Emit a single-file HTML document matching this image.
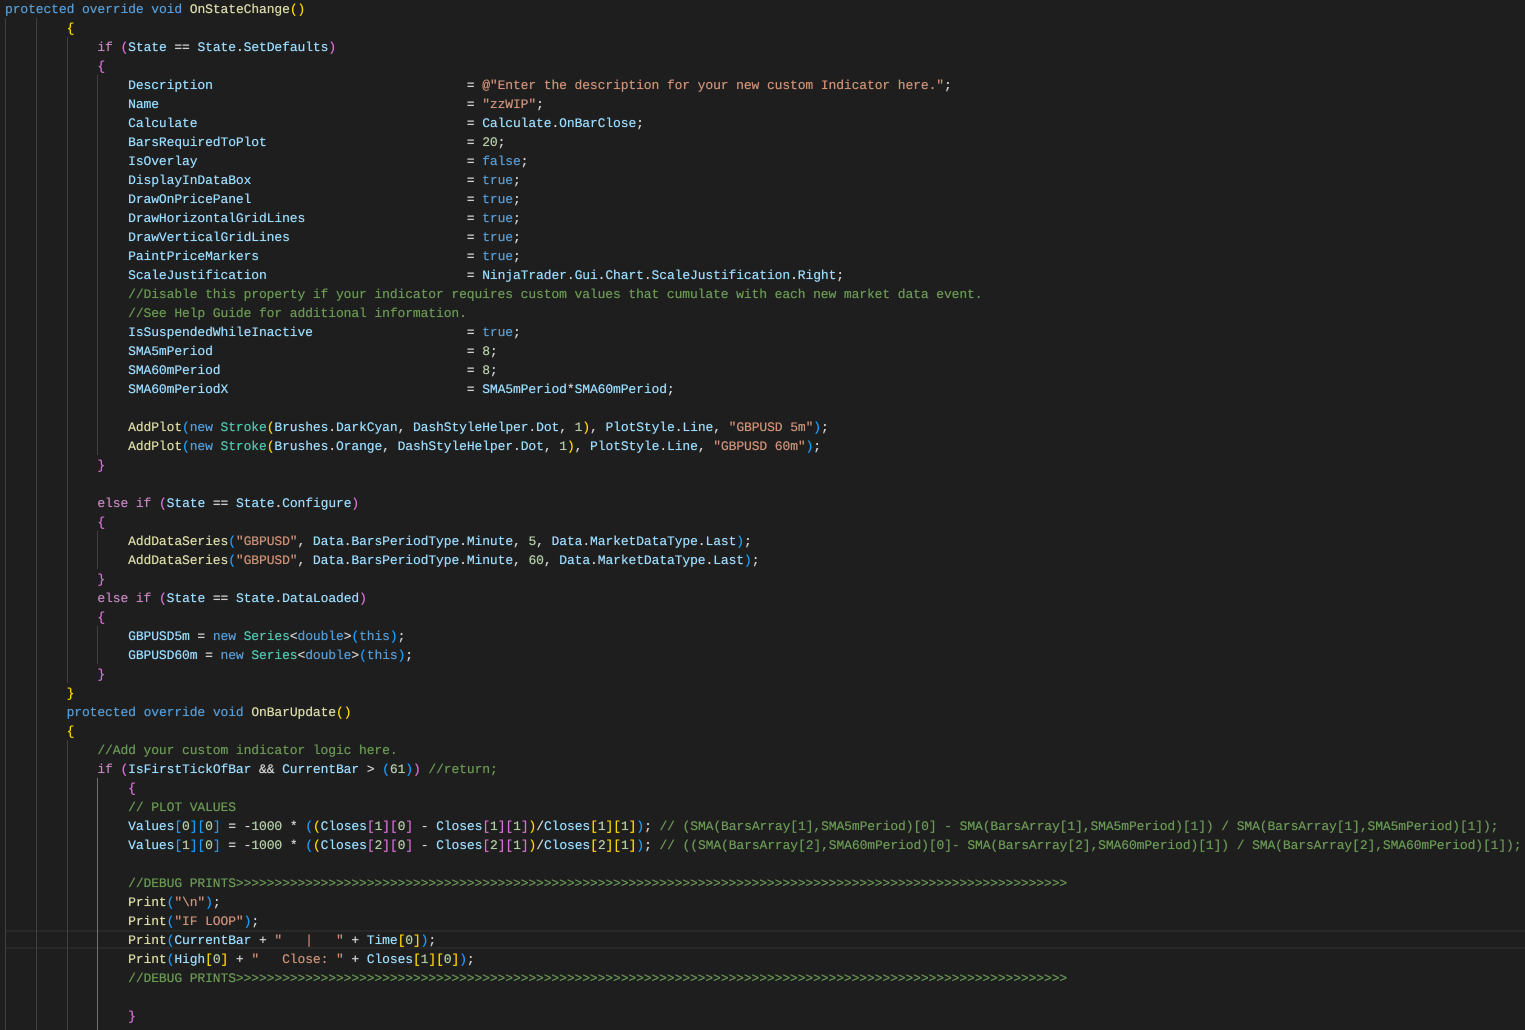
<!DOCTYPE html>
<html lang="en">
<head>
<meta charset="utf-8">
<title>OnStateChange</title>
<style>
html,body{margin:0;padding:0;background:#1e1e1e;width:1525px;height:1030px;overflow:hidden}
#e{position:relative;width:1525px;height:1030px;overflow:hidden;background:#1e1e1e}
pre{position:absolute;left:5px;top:0;margin:0;font-family:"Liberation Mono",monospace;font-size:13px;line-height:19px;letter-spacing:-.105px;color:#d4d4d4;white-space:pre;text-rendering:geometricPrecision;text-shadow:0 0 .5px currentColor}
.g{position:absolute;width:1px;background:#404040}
.a{background:#707070}
.l{position:absolute;left:6px;right:0;top:930px;height:15px;border-top:2px solid #282828;border-bottom:2px solid #282828}
i{font-style:normal}
.k{color:#569cd6}.c{color:#c586c0}.v{color:#9cdcfe}.f{color:#dcdcaa}.s{color:#ce9178}.n{color:#b5cea8}.m{color:#6a9955}.t{color:#4ec9b0}
.Y{color:#ffd700}.P{color:#da70d6}.B{color:#179fff}
</style>
</head>
<body>
<div id="e">
<div class="l"></div>
<div class="g" style="left:5px;top:18px;height:1012px"></div>
<div class="g" style="left:36px;top:18px;height:1012px"></div>
<div class="g" style="left:67px;top:37px;height:646px"></div>
<div class="g" style="left:67px;top:740px;height:290px"></div>
<div class="g" style="left:97px;top:75px;height:380px"></div>
<div class="g" style="left:97px;top:531px;height:38px"></div>
<div class="g" style="left:97px;top:626px;height:38px"></div>
<div class="g a" style="left:97px;top:778px;height:252px"></div>
<pre><i class="k">protected</i> <i class="k">override</i> <i class="k">void</i> <i class="f">OnStateChange</i><i class="Y">()</i>
        <i class="Y">{</i>
            <i class="c">if</i> <i class="P">(</i><i class="v">State</i> == <i class="v">State</i>.<i class="v">SetDefaults</i><i class="P">)</i>
            <i class="P">{</i>
                <i class="v">Description</i>                                 = <i class="s">@"Enter the description for your new custom Indicator here."</i>;
                <i class="v">Name</i>                                        = <i class="s">"zzWIP"</i>;
                <i class="v">Calculate</i>                                   = <i class="v">Calculate</i>.<i class="v">OnBarClose</i>;
                <i class="v">BarsRequiredToPlot</i>                          = <i class="n">20</i>;
                <i class="v">IsOverlay</i>                                   = <i class="k">false</i>;
                <i class="v">DisplayInDataBox</i>                            = <i class="k">true</i>;
                <i class="v">DrawOnPricePanel</i>                            = <i class="k">true</i>;
                <i class="v">DrawHorizontalGridLines</i>                     = <i class="k">true</i>;
                <i class="v">DrawVerticalGridLines</i>                       = <i class="k">true</i>;
                <i class="v">PaintPriceMarkers</i>                           = <i class="k">true</i>;
                <i class="v">ScaleJustification</i>                          = <i class="v">NinjaTrader</i>.<i class="v">Gui</i>.<i class="v">Chart</i>.<i class="v">ScaleJustification</i>.<i class="v">Right</i>;
                <i class="m">//Disable this property if your indicator requires custom values that cumulate with each new market data event. </i>
                <i class="m">//See Help Guide for additional information.</i>
                <i class="v">IsSuspendedWhileInactive</i>                    = <i class="k">true</i>;
                <i class="v">SMA5mPeriod</i>                                 = <i class="n">8</i>;
                <i class="v">SMA60mPeriod</i>                                = <i class="n">8</i>;
                <i class="v">SMA60mPeriodX</i>                               = <i class="v">SMA5mPeriod</i>*<i class="v">SMA60mPeriod</i>;

                <i class="f">AddPlot</i><i class="B">(</i><i class="k">new</i> <i class="t">Stroke</i><i class="Y">(</i><i class="v">Brushes</i>.<i class="v">DarkCyan</i>, <i class="v">DashStyleHelper</i>.<i class="v">Dot</i>, <i class="n">1</i><i class="Y">)</i>, <i class="v">PlotStyle</i>.<i class="v">Line</i>, <i class="s">"GBPUSD 5m"</i><i class="B">)</i>;
                <i class="f">AddPlot</i><i class="B">(</i><i class="k">new</i> <i class="t">Stroke</i><i class="Y">(</i><i class="v">Brushes</i>.<i class="v">Orange</i>, <i class="v">DashStyleHelper</i>.<i class="v">Dot</i>, <i class="n">1</i><i class="Y">)</i>, <i class="v">PlotStyle</i>.<i class="v">Line</i>, <i class="s">"GBPUSD 60m"</i><i class="B">)</i>;
            <i class="P">}</i>

            <i class="c">else</i> <i class="c">if</i> <i class="P">(</i><i class="v">State</i> == <i class="v">State</i>.<i class="v">Configure</i><i class="P">)</i>
            <i class="P">{</i>
                <i class="f">AddDataSeries</i><i class="B">(</i><i class="s">"GBPUSD"</i>, <i class="v">Data</i>.<i class="v">BarsPeriodType</i>.<i class="v">Minute</i>, <i class="n">5</i>, <i class="v">Data</i>.<i class="v">MarketDataType</i>.<i class="v">Last</i><i class="B">)</i>;
                <i class="f">AddDataSeries</i><i class="B">(</i><i class="s">"GBPUSD"</i>, <i class="v">Data</i>.<i class="v">BarsPeriodType</i>.<i class="v">Minute</i>, <i class="n">60</i>, <i class="v">Data</i>.<i class="v">MarketDataType</i>.<i class="v">Last</i><i class="B">)</i>;
            <i class="P">}</i>
            <i class="c">else</i> <i class="c">if</i> <i class="P">(</i><i class="v">State</i> == <i class="v">State</i>.<i class="v">DataLoaded</i><i class="P">)</i>
            <i class="P">{</i>
                <i class="v">GBPUSD5m</i> = <i class="k">new</i> <i class="t">Series</i>&lt;<i class="k">double</i>&gt;<i class="B">(</i><i class="k">this</i><i class="B">)</i>;
                <i class="v">GBPUSD60m</i> = <i class="k">new</i> <i class="t">Series</i>&lt;<i class="k">double</i>&gt;<i class="B">(</i><i class="k">this</i><i class="B">)</i>;
            <i class="P">}</i>
        <i class="Y">}</i>
        <i class="k">protected</i> <i class="k">override</i> <i class="k">void</i> <i class="f">OnBarUpdate</i><i class="Y">()</i>
        <i class="Y">{</i>
            <i class="m">//Add your custom indicator logic here.</i>
            <i class="c">if</i> <i class="P">(</i><i class="v">IsFirstTickOfBar</i> &amp;&amp; <i class="v">CurrentBar</i> &gt; <i class="B">(</i><i class="n">61</i><i class="B">)</i><i class="P">)</i> <i class="m">//return;</i>
                <i class="P">{</i>
                <i class="m">// PLOT VALUES</i>
                <i class="v">Values</i><i class="B">[</i><i class="n">0</i><i class="B">][</i><i class="n">0</i><i class="B">]</i> = -<i class="n">1000</i> * <i class="B">(</i><i class="Y">(</i><i class="v">Closes</i><i class="P">[</i><i class="n">1</i><i class="P">][</i><i class="n">0</i><i class="P">]</i> - <i class="v">Closes</i><i class="P">[</i><i class="n">1</i><i class="P">][</i><i class="n">1</i><i class="P">]</i><i class="Y">)</i>/<i class="v">Closes</i><i class="Y">[</i><i class="n">1</i><i class="Y">][</i><i class="n">1</i><i class="Y">]</i><i class="B">)</i>; <i class="m">// (SMA(BarsArray[1],SMA5mPeriod)[0] - SMA(BarsArray[1],SMA5mPeriod)[1]) / SMA(BarsArray[1],SMA5mPeriod)[1]);</i>
                <i class="v">Values</i><i class="B">[</i><i class="n">1</i><i class="B">][</i><i class="n">0</i><i class="B">]</i> = -<i class="n">1000</i> * <i class="B">(</i><i class="Y">(</i><i class="v">Closes</i><i class="P">[</i><i class="n">2</i><i class="P">][</i><i class="n">0</i><i class="P">]</i> - <i class="v">Closes</i><i class="P">[</i><i class="n">2</i><i class="P">][</i><i class="n">1</i><i class="P">]</i><i class="Y">)</i>/<i class="v">Closes</i><i class="Y">[</i><i class="n">2</i><i class="Y">][</i><i class="n">1</i><i class="Y">]</i><i class="B">)</i>; <i class="m">// ((SMA(BarsArray[2],SMA60mPeriod)[0]- SMA(BarsArray[2],SMA60mPeriod)[1]) / SMA(BarsArray[2],SMA60mPeriod)[1]);</i>

                <i class="m">//DEBUG PRINTS>>>>>>>>>>>>>>>>>>>>>>>>>>>>>>>>>>>>>>>>>>>>>>>>>>>>>>>>>>>>>>>>>>>>>>>>>>>>>>>>>>>>>>>>>>>>>>>>>>>>>>>>>>>></i>
                <i class="f">Print</i><i class="B">(</i><i class="s">"\n"</i><i class="B">)</i>;
                <i class="f">Print</i><i class="B">(</i><i class="s">"IF LOOP"</i><i class="B">)</i>;
                <i class="f">Print</i><i class="B">(</i><i class="v">CurrentBar</i> + <i class="s">"   |   "</i> + <i class="v">Time</i><i class="Y">[</i><i class="n">0</i><i class="Y">]</i><i class="B">)</i>;
                <i class="f">Print</i><i class="B">(</i><i class="v">High</i><i class="Y">[</i><i class="n">0</i><i class="Y">]</i> + <i class="s">"   Close: "</i> + <i class="v">Closes</i><i class="Y">[</i><i class="n">1</i><i class="Y">][</i><i class="n">0</i><i class="Y">]</i><i class="B">)</i>;
                <i class="m">//DEBUG PRINTS>>>>>>>>>>>>>>>>>>>>>>>>>>>>>>>>>>>>>>>>>>>>>>>>>>>>>>>>>>>>>>>>>>>>>>>>>>>>>>>>>>>>>>>>>>>>>>>>>>>>>>>>>>>></i>

                <i class="P">}</i></pre>
</div>
</body>
</html>
